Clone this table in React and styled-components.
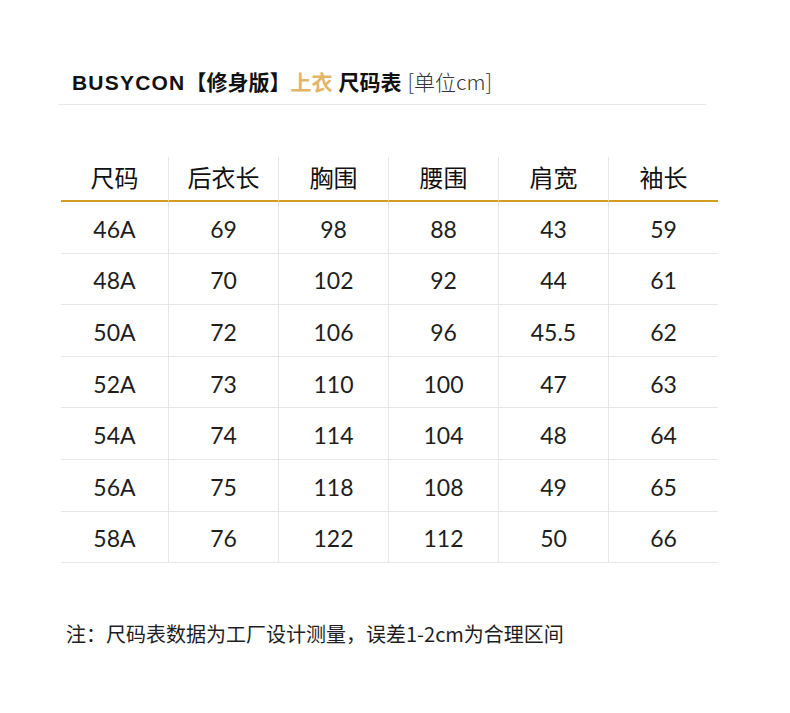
import React from 'react';
import styled, { createGlobalStyle } from 'styled-components';

const colors = {
  gold: '#d49c22',
  goldText: '#e2b567',
  ink: '#111111',
  text: '#1e1e1e',
  grid: '#e6e6e6',
  rule: '#e8e8e8',
};

const GlobalStyle = createGlobalStyle`
  html, body {
    margin: 0;
    padding: 0;
    background: #ffffff;
  }
  body {
    font-family: "Noto Sans", "Noto Sans CJK SC", sans-serif;
    color: ${colors.text};
  }
`;

const Page = styled.div`
  width: 790px;
  height: 713px;
  padding-top: 66px;
  box-sizing: border-box;
`;

const TitleBar = styled.div`
  margin: 0 84px 0 58px;
  padding: 0 0 8px 14px;
  border-bottom: 1px solid ${colors.rule};
  display: flex;
  align-items: baseline;
  white-space: nowrap;
`;

const Brand = styled.span`
  font-family: "Liberation Sans", Arial, sans-serif;
  font-weight: 700;
  font-size: 21px;
  letter-spacing: 1.2px;
  color: ${colors.ink};
`;

const TitleCJK = styled.span`
  font-family: "Noto Sans CJK SC", sans-serif;
  font-weight: ${({ light }) => (light ? 300 : 700)};
  font-size: 21px;
  color: ${({ accent, light }) => (accent ? colors.goldText : light ? '#333' : colors.ink)};
  margin-left: ${({ gap }) => gap || 0}px;
`;

const Table = styled.div`
  margin: 52px 0 0 61px;
  width: 657px;
  display: grid;
  grid-template-columns: 107px repeat(5, 110px);
`;

const HeadCell = styled.div`
  height: 45px;
  padding-bottom: 3px;
  box-sizing: border-box;
  border-bottom: 2px solid ${colors.gold};
  border-left: ${({ first }) => (first ? 'none' : `1px solid ${colors.grid}`)};
  display: flex;
  align-items: center;
  justify-content: center;
  font-family: "Noto Sans CJK SC", sans-serif;
  font-size: 24px;
  color: ${colors.ink};
  line-height: 1;
`;

const Cell = styled.div`
  height: 51.6px;
  padding-top: 4px;
  box-sizing: border-box;
  border-bottom: 1px solid ${colors.grid};
  border-left: ${({ first }) => (first ? 'none' : `1px solid ${colors.grid}`)};
  display: flex;
  align-items: center;
  justify-content: center;
  font-family: "Lato", "Noto Sans", sans-serif;
  font-size: 23px;
  color: ${colors.text};
  line-height: 1;
`;

const Note = styled.p`
  margin: 56px 0 0 66px;
  font-family: "Noto Sans CJK SC", sans-serif;
  font-size: 20px;
  color: ${colors.text};
  white-space: nowrap;
`;

const headers = ['尺码', '后衣长', '胸围', '腰围', '肩宽', '袖长'];

const rows = [
  ['46A', '69', '98', '88', '43', '59'],
  ['48A', '70', '102', '92', '44', '61'],
  ['50A', '72', '106', '96', '45.5', '62'],
  ['52A', '73', '110', '100', '47', '63'],
  ['54A', '74', '114', '104', '48', '64'],
  ['56A', '75', '118', '108', '49', '65'],
  ['58A', '76', '122', '112', '50', '66'],
];

const App = () => (
  <Page>
    <GlobalStyle />
    <TitleBar>
      <Brand>BUSYCON</Brand>
      <TitleCJK>【修身版】</TitleCJK>
      <TitleCJK accent>上衣</TitleCJK>
      <TitleCJK gap={6}>尺码表</TitleCJK>
      <TitleCJK light gap={6}>[单位cm]</TitleCJK>
    </TitleBar>
    <Table>
      {headers.map((h, i) => (
        <HeadCell key={h} first={i === 0}>{h}</HeadCell>
      ))}
      {rows.map((row) =>
        row.map((v, i) => (
          <Cell key={row[0] + i} first={i === 0}>{v}</Cell>
        ))
      )}
    </Table>
    <Note>注：尺码表数据为工厂设计测量，误差1-2cm为合理区间</Note>
  </Page>
);

export default App;
